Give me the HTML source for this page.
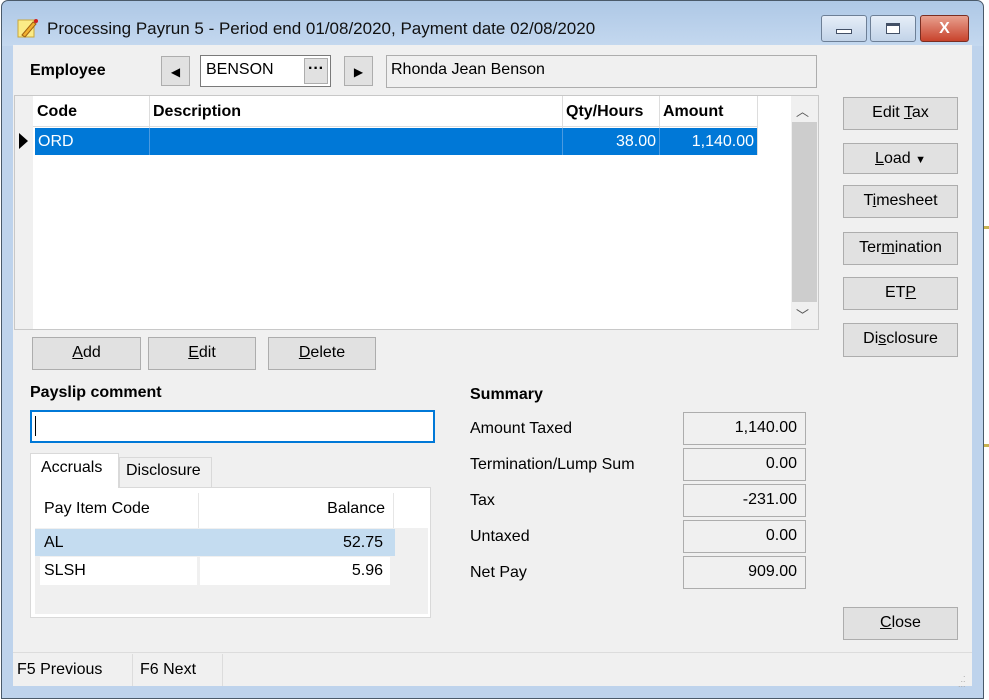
<!DOCTYPE html>
<html><head><meta charset="utf-8"><style>
*{box-sizing:border-box;margin:0;padding:0}
body{width:989px;height:700px;background:#fff;position:relative;overflow:hidden;font-family:"Liberation Sans",sans-serif;font-size:16px;color:#000}
.a{position:absolute}
.btn{position:absolute;background:#e1e1e1;border:1px solid #adadad;text-align:center;font-size:16px;line-height:30px}
.box{position:absolute;border:1px solid #adadad;background:#f0f0f0;text-align:right;padding-right:8px;line-height:30px}
u{text-decoration:underline}
</style></head><body>
<div class="a" style="left:975px;top:226px;width:14px;height:3px;background:#c9b350"></div>
<div class="a" style="left:975px;top:444px;width:14px;height:3px;background:#c9b350"></div>
<!-- window frame -->
<div class="a" style="left:1px;top:0;width:983px;height:699px;border:1px solid #4a5a6a;border-radius:7px 7px 0 0;background:linear-gradient(#aec8e6 0px,#c4d8ef 45px,#bed3ec 45px,#bed3ec 100%)"></div>
<!-- title icon -->
<svg class="a" style="left:17px;top:17px" width="22" height="22" viewBox="0 0 22 22"><rect x="1" y="3" width="16" height="17" fill="#fbeb86" stroke="#c8a63a"/><path d="M5 18 L16 5 L19 7 L8 20 Z" fill="#f0b030" stroke="#a06010"/><circle cx="19" cy="4" r="2" fill="#d02020"/></svg>
<div class="a" style="left:47px;top:19px;font-size:17px;color:#111">Processing Payrun 5 - Period end 01/08/2020, Payment date 02/08/2020</div>
<!-- caption buttons -->
<div class="a" style="left:821px;top:15px;width:46px;height:27px;border:1px solid #6d7f96;border-radius:3px;background:linear-gradient(#e6eef8,#c2d3e8)"><div class="a" style="left:14px;top:13px;width:16px;height:5px;border:1px solid #435066;background:#fff"></div></div>
<div class="a" style="left:870px;top:15px;width:46px;height:27px;border:1px solid #6d7f96;border-radius:3px;background:linear-gradient(#e6eef8,#c2d3e8)"><div class="a" style="left:15px;top:7px;width:14px;height:11px;border:1px solid #435066;border-top-width:3px;background:#fff"></div></div>
<div class="a" style="left:920px;top:15px;width:49px;height:27px;border:1px solid #7b2e22;border-radius:3px;background:linear-gradient(#e8a08f,#c8432c);color:#fff;font-weight:bold;text-align:center;line-height:25px;font-size:16px">X</div>
<!-- client -->
<div class="a" style="left:13px;top:45px;width:959px;height:641px;background:#f0f0f0"></div>
<div class="a" style="left:30px;top:62px;font-weight:bold;font-size:16px">Employee</div>
<div class="btn" style="left:161px;top:56px;width:29px;height:30px;font-size:12px">◀</div>
<div class="a" style="left:200px;top:55px;width:131px;height:32px;background:#fff;border:1px solid #7a7a7a"></div>
<div class="a" style="left:206px;top:61px">BENSON</div>
<div class="btn" style="left:304px;top:58px;width:24px;height:26px;line-height:20px;font-weight:bold">···</div>
<div class="btn" style="left:344px;top:56px;width:29px;height:30px;font-size:12px">▶</div>
<div class="a" style="left:386px;top:55px;width:431px;height:33px;border:1px solid #adadad;background:#f0f0f0"></div>
<div class="a" style="left:391px;top:61px">Rhonda Jean Benson</div>
<!-- grid -->
<div class="a" style="left:14px;top:95px;width:805px;height:235px;background:#fff;border:1px solid #c8c8c8"></div>
<div class="a" style="left:15px;top:96px;width:18px;height:233px;background:#f0f0f0"></div>
<div class="a" style="left:33px;top:96px;width:724px;height:31px;background:#fff;border-bottom:1px solid #ddd"></div>
<div class="a" style="left:149px;top:96px;width:1px;height:59px;background:#ddd"></div>
<div class="a" style="left:562px;top:96px;width:1px;height:59px;background:#ddd"></div>
<div class="a" style="left:659px;top:96px;width:1px;height:59px;background:#ddd"></div>
<div class="a" style="left:757px;top:96px;width:1px;height:59px;background:#ddd"></div>
<div class="a" style="left:37px;top:103px;font-weight:bold">Code</div>
<div class="a" style="left:153px;top:103px;font-weight:bold">Description</div>
<div class="a" style="left:566px;top:103px;font-weight:bold">Qty/Hours</div>
<div class="a" style="left:663px;top:103px;font-weight:bold">Amount</div>
<div class="a" style="left:35px;top:128px;width:722px;height:27px;background:#0078d7"></div>
<div class="a" style="left:149px;top:128px;width:1px;height:27px;background:#4a9ae0"></div>
<div class="a" style="left:562px;top:128px;width:1px;height:27px;background:#4a9ae0"></div>
<div class="a" style="left:659px;top:128px;width:1px;height:27px;background:#4a9ae0"></div>
<div class="a" style="left:19px;top:133px;width:0;height:0;border-left:9px solid #000;border-top:8px solid transparent;border-bottom:8px solid transparent"></div>
<div class="a" style="left:38px;top:133px;color:#fff">ORD</div>
<div class="a" style="left:562px;top:133px;width:94px;text-align:right;color:#fff">38.00</div>
<div class="a" style="left:659px;top:133px;width:95px;text-align:right;color:#fff">1,140.00</div>
<div class="a" style="left:791px;top:96px;width:27px;height:233px;background:#f0f0f0"></div>
<div class="a" style="left:792px;top:122px;width:25px;height:180px;background:#cdcdcd"></div>
<div class="a" style="left:796px;top:101px;font-size:13px;color:#555">︿</div>
<div class="a" style="left:796px;top:305px;font-size:13px;color:#555">﹀</div>
<!-- right buttons -->
<div class="btn" style="left:843px;top:97px;width:115px;height:33px">Edit <u>T</u>ax</div>
<div class="btn" style="left:843px;top:143px;width:115px;height:31px;line-height:29px"><u>L</u>oad <span style="font-size:11px">▼</span></div>
<div class="btn" style="left:843px;top:185px;width:115px;height:33px">T<u>i</u>mesheet</div>
<div class="btn" style="left:843px;top:232px;width:115px;height:33px">Ter<u>m</u>ination</div>
<div class="btn" style="left:843px;top:277px;width:115px;height:33px">ET<u>P</u></div>
<div class="btn" style="left:843px;top:323px;width:115px;height:34px">Di<u>s</u>closure</div>
<div class="btn" style="left:843px;top:607px;width:115px;height:33px"><u>C</u>lose</div>
<!-- add/edit/delete -->
<div class="btn" style="left:32px;top:337px;width:109px;height:33px"><u>A</u>dd</div>
<div class="btn" style="left:148px;top:337px;width:108px;height:33px"><u>E</u>dit</div>
<div class="btn" style="left:268px;top:337px;width:108px;height:33px"><u>D</u>elete</div>
<!-- payslip -->
<div class="a" style="left:30px;top:384px;font-weight:bold">Payslip comment</div>
<div class="a" style="left:30px;top:410px;width:405px;height:33px;background:#fff;border:2px solid #0078d7"></div>
<div class="a" style="left:35px;top:416px;width:1px;height:20px;background:#000"></div>
<!-- tabs -->
<div class="a" style="left:30px;top:487px;width:401px;height:131px;background:#fff;border:1px solid #d9d9d9"></div>
<div class="a" style="left:35px;top:528px;width:393px;height:86px;background:#f0f0f0"></div>
<div class="a" style="left:119px;top:457px;width:93px;height:31px;background:#f0f0f0;border:1px solid #d9d9d9"></div>
<div class="a" style="left:126px;top:462px">Disclosure</div>
<div class="a" style="left:30px;top:453px;width:89px;height:35px;background:#fff;border:1px solid #d9d9d9;border-bottom:none"></div>
<div class="a" style="left:41px;top:459px">Accruals</div>
<div class="a" style="left:198px;top:493px;width:1px;height:35px;background:#e6e6e6"></div>
<div class="a" style="left:393px;top:493px;width:1px;height:35px;background:#e6e6e6"></div>
<div class="a" style="left:44px;top:500px">Pay Item Code</div>
<div class="a" style="left:200px;top:500px;width:185px;text-align:right">Balance</div>
<div class="a" style="left:35px;top:529px;width:360px;height:27px;background:#c4dcf0"></div>
<div class="a" style="left:44px;top:534px">AL</div>
<div class="a" style="left:200px;top:534px;width:183px;text-align:right">52.75</div>
<div class="a" style="left:40px;top:557px;width:157px;height:28px;background:#fff"></div>
<div class="a" style="left:200px;top:557px;width:190px;height:28px;background:#fff"></div>
<div class="a" style="left:44px;top:562px">SLSH</div>
<div class="a" style="left:200px;top:562px;width:183px;text-align:right">5.96</div>
<!-- summary -->
<div class="a" style="left:470px;top:386px;font-weight:bold">Summary</div>
<div class="a" style="left:470px;top:420px">Amount Taxed</div>
<div class="a" style="left:470px;top:456px">Termination/Lump Sum</div>
<div class="a" style="left:470px;top:492px">Tax</div>
<div class="a" style="left:470px;top:528px">Untaxed</div>
<div class="a" style="left:470px;top:564px">Net Pay</div>
<div class="box" style="left:683px;top:412px;width:123px;height:33px">1,140.00</div>
<div class="box" style="left:683px;top:448px;width:123px;height:33px">0.00</div>
<div class="box" style="left:683px;top:484px;width:123px;height:33px">-231.00</div>
<div class="box" style="left:683px;top:520px;width:123px;height:33px">0.00</div>
<div class="box" style="left:683px;top:556px;width:123px;height:33px">909.00</div>
<!-- status bar -->
<div class="a" style="left:13px;top:652px;width:959px;height:1px;background:#dcdcdc"></div>
<div class="a" style="left:132px;top:654px;width:1px;height:32px;background:#dcdcdc"></div>
<div class="a" style="left:222px;top:654px;width:1px;height:32px;background:#dcdcdc"></div>
<div class="a" style="left:17px;top:661px">F5 Previous</div>
<div class="a" style="left:140px;top:661px">F6 Next</div>
<div class="a" style="left:958px;top:672px;font-size:9px;color:#aaa;line-height:5px">&nbsp;&nbsp;.<br>&nbsp;..<br>...</div>
</body></html>
